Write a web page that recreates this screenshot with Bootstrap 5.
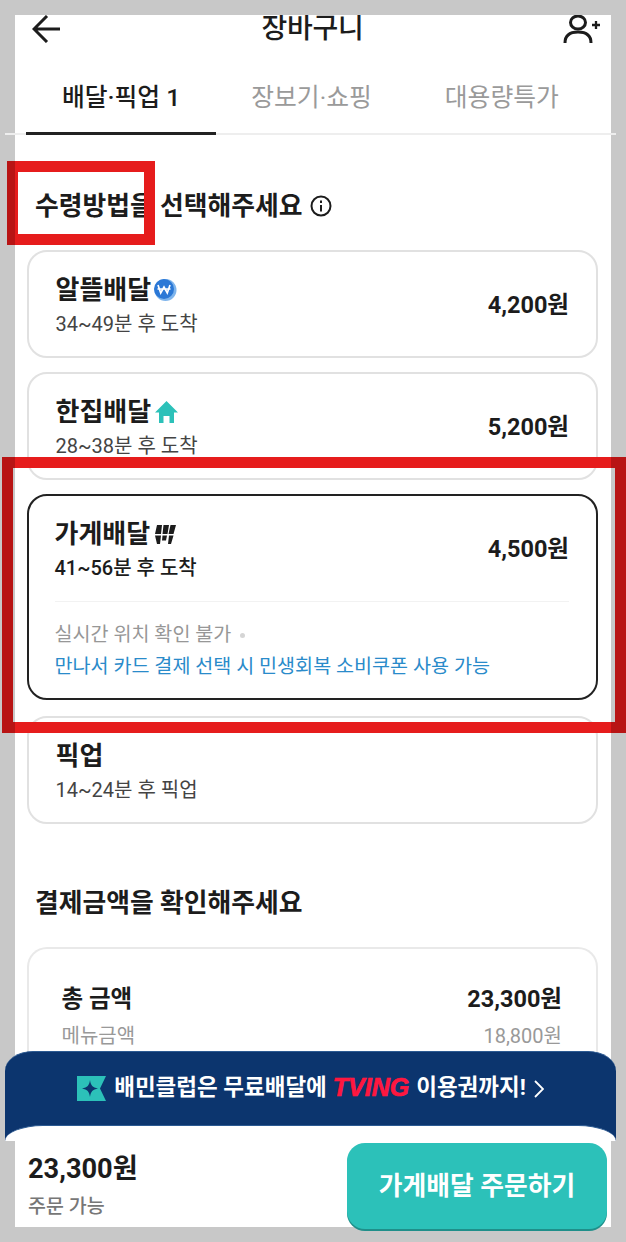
<!DOCTYPE html>
<html lang="ko">
<head>
<meta charset="utf-8">
<title>장바구니</title>
<link href="https://cdn.jsdelivr.net/npm/bootstrap@5.3.0/dist/css/bootstrap.min.css" rel="stylesheet">
<style>
html,body{height:1242px;overflow:hidden}
body{background:#c8c8c8;font-family:Roboto,"Noto Sans CJK KR","Noto Sans",sans-serif;color:#1c1c1c;position:relative}
.scr{position:absolute;left:15px;top:15px;width:596px;height:1212px;background:#fff}
.scr-head{height:29px;overflow:hidden;padding:0 11px 0 17px}
.scr-title{font-size:28px;font-weight:500;line-height:29px;margin-top:-1px;letter-spacing:-.2px}
.tab-row{margin:0 -5px 0 -10px;padding:0 19px 0 21px;height:91px;border-bottom:2px solid #eee}
.tab-item{flex:1 1 0;text-align:center;font-size:24.800px;line-height:32px;padding-top:38px;color:#9a9a9a;margin-bottom:-2px}
.tab-on{color:#1c1c1c;font-weight:500;border-bottom:3px solid #222}
.sec-head{font-size:25.800px;font-weight:700;line-height:32px;padding-left:20px;margin-bottom:0}
.sec-one{margin-top:55px}
.sec-two{margin-top:63px}
.opt{margin:0 13px 14px 11.500px;border:2px solid #e1e1e1;border-radius:20px;padding:21px 27px 0 27px;height:108px}
.opt-on{border-color:#222;height:206px;margin-bottom:15.500px;padding:21px 27px 0 26px}
.opt-list{margin-top:28px}
.opt-name{font-size:26px;font-weight:700;line-height:34px;color:#1c1c1c}
.opt-ico{margin-left:-2px}
.opt-time{font-size:20px;line-height:27px;margin-top:4px;color:#444}
.opt-on .opt-time{color:#1c1c1c;font-weight:500;margin-top:4px}
.opt-price{font-size:23.500px;font-weight:700;line-height:30px;margin-top:17px}
.opt-rule{border-top:1px solid #f2f2f2;margin-top:19px}
.opt-note{font-size:19.600px;line-height:26px;margin-top:20px;color:#979797}
.opt-dot{width:5px;height:5px;border-radius:50%;background:#d5d5d5;margin-left:9px}
.opt-link{font-size:19.600px;line-height:26px;margin-top:6px;color:#2a8bca}
.pay-box{margin:28px 13px 0 11.500px;border:2px solid #e9e9e9;border-bottom:0;border-radius:20px 20px 0 0;padding:34px 34px 0 33px;height:140px}
.pay-main{font-size:23.500px;font-weight:700;line-height:32px}
.pay-sub{font-size:20px;line-height:26px;color:#999;margin-top:8px}
.foot{position:absolute;left:5px;top:1051px;width:611px}
.foot-ban{background:#0c356e;height:90px;border-radius:28px 28px 0 0/20px 20px 0 0;padding-top:20px;color:#fff;font-size:22.500px;font-weight:700;line-height:30px;border-top:1px solid #2c5a92}
.tving{font-family:"Liberation Sans",sans-serif;font-style:italic;font-weight:700;font-size:25px;color:#ff173f;-webkit-text-stroke:.7px #ff173f;margin:0 7px 0 6px}
.foot-cap{height:16px;margin-top:-16px;background:#fff;border-radius:38px 38px 0 0/16px 16px 0 0;position:relative;border-top:1px solid #2c5a92}
.foot-body{margin:0 5px 0 10px;height:86px;background:#fff;position:relative;padding-left:13px;padding-top:11px}
.foot-sum{font-size:27.200px;font-weight:700;line-height:34px}
.foot-can{font-size:19.500px;line-height:26px;color:#777;margin-top:8px;font-weight:500}
.foot-btn{position:absolute;right:4px;top:2px;width:260px;height:86px;border:0;border-radius:18px;background:#2cc1b9;color:#fff;font-size:25.800px;font-weight:700;box-shadow:0 2px 0 #1f8f8a;padding:0}
.foot-btn:hover{background:#2cc1b9;color:#fff}
.mark-a,.mark-b{position:absolute;border:11px solid #e61c1c;pointer-events:none}
.mark-a{left:7px;top:161px;width:148px;height:84px;border-image:linear-gradient(90deg,#b81414 8px,#e61c1c 8px) 11}
.mark-b{left:2px;top:457px;width:624px;height:276px;border-image:linear-gradient(90deg,#b81414 13px,#e61c1c 13px,#e61c1c 609px,#b81414 609px) 11}
</style>
</head>
<body>
<main class="scr">
  <div class="scr-head d-flex justify-content-between align-items-start">
    <svg width="30" height="28" viewBox="0 0 30 28" fill="none" stroke="#1c1c1c" stroke-width="3"><path d="M15 1 2 14l13 13M2 14h26"/></svg>
    <div class="scr-title">장바구니</div>
    <svg width="37" height="29" viewBox="0 0 37 29" fill="none" stroke="#1c1c1c" stroke-width="3"><ellipse cx="15" cy="7.500" rx="7.500" ry="6.500"/><path d="M2 28c0-8 5-11 13-11s13 3 13 11"/><path d="M29 10h8M33 6v8" stroke-width="2.300"/></svg>
  </div>
  <div class="tab-row d-flex">
    <div class="tab-item tab-on">배달·픽업 1</div>
    <div class="tab-item">장보기·쇼핑</div>
    <div class="tab-item">대용량특가</div>
  </div>
  <h2 class="sec-head sec-one d-flex align-items-center gap-2">수령방법을 선택해주세요
    <svg width="22" height="22" viewBox="0 0 22 22" fill="none" stroke="#1c1c1c" stroke-width="2"><circle cx="11" cy="11" r="9.500"/><path d="M11 10v6.500M11 5.500v2.400"/></svg>
  </h2>
  <div class="opt-list">
    <div class="opt d-flex justify-content-between">
      <div>
        <div class="opt-name d-flex align-items-center gap-1">알뜰배달
          <svg class="opt-ico" width="24" height="22" viewBox="0 0 24 22"><circle cx="12.500" cy="11" r="11" fill="#7fb5ec"/><circle cx="11" cy="10" r="10" fill="#2b78d6"/><path d="M5 6l2.700 8L11 8l3.300 6L17 6M4.500 10h13" fill="none" stroke="#fff" stroke-width="1.700"/></svg>
        </div>
        <div class="opt-time">34~49분 후 도착</div>
      </div>
      <div class="opt-price">4,200원</div>
    </div>
    <div class="opt d-flex justify-content-between">
      <div>
        <div class="opt-name d-flex align-items-center gap-1">한집배달
          <svg width="23" height="22" viewBox="0 0 23 22"><path d="M11.500 0 23 11.500h-4V22h-4.500v-7h-6v7H4V11.500H0z" fill="#2cc1b9"/></svg>
        </div>
        <div class="opt-time">28~38분 후 도착</div>
      </div>
      <div class="opt-price">5,200원</div>
    </div>
    <div class="opt opt-on">
      <div class="d-flex justify-content-between">
        <div>
          <div class="opt-name d-flex align-items-center gap-1">가게배달
            <svg width="22" height="20" viewBox="0 0 22 20" fill="#1c1c1c"><path d="M3 1h5L7 10H1zM9.500 1H15l-1.500 9H8.500zM16.500 1H22l-2.500 9h-5zM1 11.500h6L6 20H3zM15 11.500h4.500L17 20h-3zM8.500 11.500h4.500l-1 5H8z"/></svg>
          </div>
          <div class="opt-time">41~56분 후 도착</div>
        </div>
        <div class="opt-price">4,500원</div>
      </div>
      <div class="opt-rule"></div>
      <div class="opt-note d-flex align-items-center">실시간 위치 확인 불가<span class="opt-dot"></span></div>
      <div class="opt-link">만나서 카드 결제 선택 시 민생회복 소비쿠폰 사용 가능</div>
    </div>
    <div class="opt d-flex justify-content-between mb-0">
      <div>
        <div class="opt-name">픽업</div>
        <div class="opt-time">14~24분 후 픽업</div>
      </div>
    </div>
  </div>
  <h2 class="sec-head sec-two">결제금액을 확인해주세요</h2>
  <div class="pay-box">
    <div class="d-flex justify-content-between pay-main"><span>총 금액</span><span>23,300원</span></div>
    <div class="d-flex justify-content-between pay-sub"><span>메뉴금액</span><span>18,800원</span></div>
  </div>
</main>
<div class="foot">
  <div class="foot-ban d-flex justify-content-center align-items-start">
    <svg class="me-2 mt-1" width="29" height="25" viewBox="0 0 29 25"><path d="M0 0h29l-6 12.500 6 12.500H0z" fill="#2cc1b9"/><path d="M13 4c.8 5.500 2.500 7.500 8 8.500-5.500 1-7.200 3-8 8.500-.8-5.500-2.500-7.500-8-8.500 5.500-1 7.200-3 8-8.500z" fill="#0c356e"/></svg>
    <span>배민클럽은 무료배달에</span><span class="tving">TVING</span><span>이용권까지!</span>
    <svg class="ms-2 mt-2" width="10" height="18" viewBox="0 0 10 18" fill="none" stroke="#fff" stroke-width="1.800"><path d="M1 1l8 8-8 8"/></svg>
  </div>
  <div class="foot-cap"></div>
  <div class="foot-body">
    <div class="foot-sum">23,300원</div>
    <div class="foot-can">주문 가능</div>
    <button class="btn foot-btn" type="button">가게배달 주문하기</button>
  </div>
</div>
<div class="mark-a"></div>
<div class="mark-b"></div>
</body>
</html>
